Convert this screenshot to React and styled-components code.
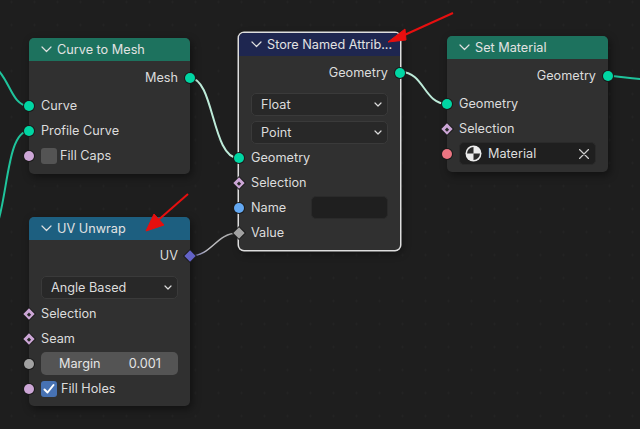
import React from "react"
import styled, { createGlobalStyle } from "styled-components"

const GlobalStyle = createGlobalStyle`
  html, body { margin: 0; padding: 0; background: #1e1e1e; }
  #root { width: 640px; height: 429px; }
`

const Editor = styled.div`
  position: relative;
  width: 640px;
  height: 429px;
  overflow: hidden;
  background-color: #1e1e1e;
  background-image: radial-gradient(circle, #232323 1px, transparent 1.2px);
  background-size: 23px 23px;
  background-position: 0 -9.5px;
  font-family: Inter, "Noto Sans", sans-serif;
  font-size: 12.7px;
  color: #dcdcdc;
`

const Overlay = styled.svg`
  position: absolute;
  left: 0;
  top: 0;
  z-index: ${p => p.$front ? 3 : 0};
  pointer-events: none;
`

const Node = styled.div`
  position: absolute;
  left: ${p => p.$x}px;
  top: ${p => p.$y}px;
  width: ${p => p.$w}px;
  z-index: 1;
  box-sizing: border-box;
  display: flex;
  flex-direction: column;
  background: #303030;
  border-radius: 5px;
  padding-bottom: ${p => p.$pb || 5}px;
  box-shadow: ${p => p.$selected ? "0 0 0 1.5px #dedede," : ""} 2px 3px 8px rgba(0, 0, 0, 0.45);
`

const Header = styled.div`
  height: 23px;
  display: flex;
  align-items: center;
  gap: 5px;
  padding-left: 12px;
  margin-bottom: ${p => p.$mb || 4}px;
  border-radius: 5px 5px 0 0;
  background: ${p => p.$color};
  color: #e2e2e2;
  white-space: nowrap;
`

const Row = styled.div`
  position: relative;
  height: 25px;
  flex: none;
  display: flex;
  align-items: center;
  gap: ${p => p.$gap || 0}px;
  justify-content: ${p => p.$output ? "flex-end" : "flex-start"};
  padding: 0 12px;
  margin-bottom: ${p => p.$mb || 0}px;
`

const Socket = styled.span`
  position: absolute;
  top: 50%;
  ${p => p.$output ? "right: -5px" : "left: -5px"};
  width: 10px;
  height: 10px;
  margin-top: -5px;
  border-radius: 50%;
  background: ${p => p.$color};
  box-shadow: 0 0 0 1px #1a1a1a;
  z-index: 2;
`

const DiamondSocket = styled.span`
  position: absolute;
  top: 50%;
  ${p => p.$output ? "right: -4px" : "left: -4px"};
  width: 8px;
  height: 8px;
  margin-top: -4px;
  box-sizing: border-box;
  transform: rotate(45deg);
  background: ${p => p.$color};
  box-shadow: 0 0 0 1px #1a1a1a;
  z-index: 2;
  &::after {
    content: ${p => p.$dot ? '""' : "none"};
    position: absolute;
    left: 2.5px;
    top: 2.5px;
    width: 3px;
    height: 3px;
    background: #2a2a2a;
  }
`

const Select = styled.div`
  flex: 1;
  height: 23px;
  box-sizing: border-box;
  display: flex;
  align-items: center;
  justify-content: space-between;
  padding: 0 5px 0 9px;
  background: #282828;
  border: 1px solid #3a3a3a;
  border-radius: 5px;
`

const FieldInput = styled.div`
  width: 77px;
  height: 23px;
  margin-left: auto;
  box-sizing: border-box;
  background: #1f1f1f;
  border: 1px solid #2a2a2a;
  border-radius: 5px;
`

const NumberField = styled.div`
  flex: 1;
  height: 23px;
  display: flex;
  align-items: center;
  justify-content: space-between;
  padding: 0 17px 0 18px;
  background: #545454;
  border-radius: 5px;
  color: #e4e4e4;
`

const CheckBox = styled.span`
  width: 16px;
  height: 16px;
  display: flex;
  align-items: center;
  justify-content: center;
  border-radius: 3px;
  background: ${p => p.$on ? "#4772b3" : "#545454"};
`

const MaterialField = styled.div`
  flex: 1;
  height: 23px;
  box-sizing: border-box;
  display: flex;
  align-items: center;
  gap: 6px;
  padding: 0 6px 0 5px;
  background: #1f1f1f;
  border: 1px solid #2a2a2a;
  border-radius: 5px;
`

const Grow = styled.span`
  flex: 1;
`

const Chevron = () => (
  <svg width="11" height="7" viewBox="0 0 11 7" fill="none" stroke="#e0e0e0" strokeWidth="1.2" strokeLinecap="round" strokeLinejoin="round">
    <path d="M1 1l4.5 4.5L10 1" />
  </svg>
)

const SmallChevron = () => (
  <svg width="8" height="5" viewBox="0 0 8 5" fill="none" stroke="#dcdcdc" strokeWidth="1.2" strokeLinecap="round" strokeLinejoin="round">
    <path d="M1 1l3 3 3-3" />
  </svg>
)

const MaterialIcon = () => (
  <svg width="17" height="17" viewBox="0 0 17 17">
    <circle cx="8.5" cy="8.5" r="8" fill="#ececec" />
    <path d="M8.5 2a6.5 6.5 0 0 0-6.5 6.5h6.5z" fill="#2a2a2a" />
    <path d="M8.5 8.5H15a6.5 6.5 0 0 1-6.5 6.5z" fill="#2a2a2a" />
  </svg>
)

const CloseIcon = () => (
  <svg width="10" height="10" viewBox="0 0 10 10" stroke="#cfcfcf" strokeWidth="1.2" strokeLinecap="round">
    <path d="M0.5 0.5l9 9M9.5 0.5l-9 9" />
  </svg>
)

const GEO = "#00d6a3"
const FIELD = "#cca6d6"

export default function App() {
  return (
    <Editor>
      <GlobalStyle />

      <Overlay width="640" height="429" viewBox="0 0 640 429">
        <defs>
          <linearGradient id="uvWire" gradientUnits="userSpaceOnUse" x1="192" y1="256" x2="238" y2="233">
            <stop offset="0" stopColor="#6a6aa8" />
            <stop offset="0.35" stopColor="#c4c4c8" />
            <stop offset="1" stopColor="#a1a1a1" />
          </linearGradient>
        </defs>
        <g fill="none" strokeWidth="2" strokeLinecap="round">
          <path d="M-4 68C10 80 12 106 29 106" stroke="#1fc49c" />
          <path d="M-2 222C8 190 8 131 29 131" stroke="#1fc49c" />
          <path d="M190 78C214 78 212 158 238 158" stroke="#bdebd9" />
          <path d="M401 72C424 72 424 104 447 104" stroke="#bdebd9" />
          <path d="M608 76C620 76 628 79 644 79" stroke="#1fc49c" />
          <path d="M190 256C212 256 216 233 238 233" stroke="url(#uvWire)" strokeWidth="1.5" />
        </g>
      </Overlay>

      <Node $x={29} $y={38} $w={161} $pb={6}>
        <Header $color="#1d725e"><Chevron />Curve to Mesh</Header>
        <Row $output $mb={3}>Mesh<Socket $output $color={GEO} /></Row>
        <Row><Socket $color={GEO} />Curve</Row>
        <Row><Socket $color={GEO} />Profile Curve</Row>
        <Row $gap={3}><Socket $color={FIELD} /><CheckBox />Fill Caps</Row>
      </Node>

      <Node $x={29} $y={217} $w={161} $pb={5}>
        <Header $color="#1d5f80" $mb={3}><Chevron />UV Unwrap</Header>
        <Row $output $mb={7}>UV<DiamondSocket $output $color="#6363c7" /></Row>
        <Row $mb={1}><Select>Angle Based<SmallChevron /></Select></Row>
        <Row><DiamondSocket $dot $color={FIELD} />Selection</Row>
        <Row><DiamondSocket $dot $color={FIELD} />Seam</Row>
        <Row>
          <Socket $color="#a1a1a1" />
          <NumberField><span>Margin</span><span>0.001</span></NumberField>
        </Row>
        <Row $gap={4}>
          <Socket $color={FIELD} />
          <CheckBox $on>
            <svg width="12" height="12" viewBox="0 0 12 12" fill="none" stroke="#fff" strokeWidth="2" strokeLinecap="round" strokeLinejoin="round">
              <path d="M1.5 6.5l3 3 6-7.5" />
            </svg>
          </CheckBox>
          Fill Holes
        </Row>
      </Node>

      <Node $x={239} $y={33} $w={161} $pb={5} $selected>
        <Header $color="#1e2650"><Chevron />Store Named Attrib...</Header>
        <Row $output $mb={7}>Geometry<Socket $output $color={GEO} /></Row>
        <Row $mb={3}><Select>Float<SmallChevron /></Select></Row>
        <Row><Select>Point<SmallChevron /></Select></Row>
        <Row><Socket $color={GEO} />Geometry</Row>
        <Row><DiamondSocket $dot $color={FIELD} />Selection</Row>
        <Row><Socket $color="#63a8f2" />Name<FieldInput /></Row>
        <Row><DiamondSocket $color="#a1a1a1" />Value</Row>
      </Node>

      <Node $x={447} $y={36} $w={161} $pb={6}>
        <Header $color="#1d725e" $mb={4}><Chevron />Set Material</Header>
        <Row $output $mb={3}>Geometry<Socket $output $color={GEO} /></Row>
        <Row><Socket $color={GEO} />Geometry</Row>
        <Row><DiamondSocket $dot $color={FIELD} />Selection</Row>
        <Row>
          <Socket $color="#eb7582" />
          <MaterialField><MaterialIcon />Material<Grow /><CloseIcon /></MaterialField>
        </Row>
      </Node>

      <Overlay $front width="640" height="429" viewBox="0 0 640 429">
        <g stroke="#e60f0f" fill="#e60f0f">
          <path d="M453 13L400 37" strokeWidth="2" fill="none" />
          <path d="M388 42L405 29L406 40Z" />
          <path d="M188 194L156 222" strokeWidth="2" fill="none" />
          <path d="M146 231L154 214L164 225Z" />
        </g>
      </Overlay>
    </Editor>
  )
}
